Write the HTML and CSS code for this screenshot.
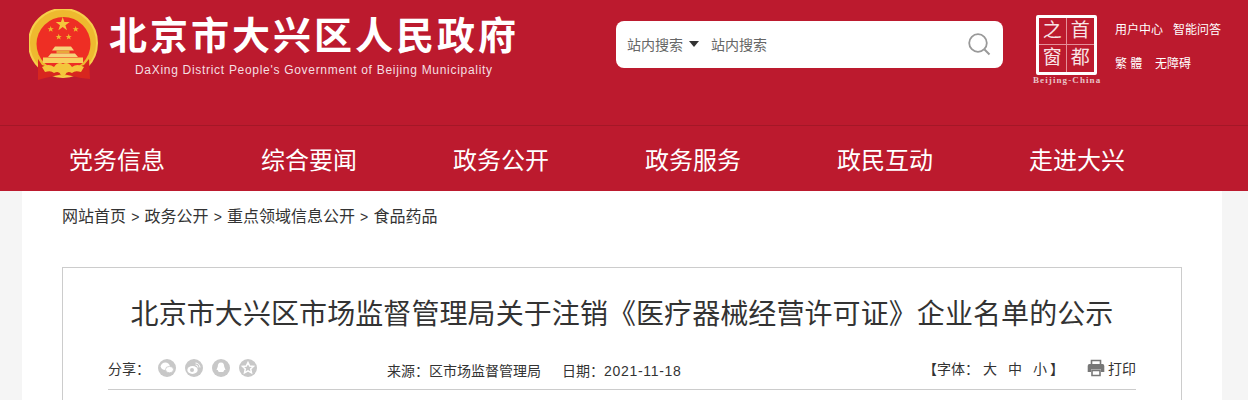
FILE: index.html
```html
<!DOCTYPE html>
<html lang="zh-CN">
<head>
  <meta charset="UTF-8">
  <title>北京市大兴区人民政府</title>
  <link rel="stylesheet" href="styles.css">
</head>
<body>

  <header class="site-header">
    <div class="emblem">
      <svg width="70" height="72" viewBox="0 0 70 72">
        <circle cx="34" cy="34" r="34" fill="#eeb92f"/>
        <circle cx="34" cy="34" r="34" fill="none" stroke="#f6cf4a" stroke-width="2"/>
        <circle cx="34.500" cy="35" r="27" fill="#ee2e24"/>
        <path d="M26 37.500 L42 37.500 L45 41.500 L23 41.500 Z" fill="#f6d27a"/>
        <path d="M27.500 41.500 L40.500 41.500 L40.500 44.500 L27.500 44.500 Z" fill="#e8a93a"/>
        <path d="M22 44.500 L46 44.500 L49 48 L19 48 Z" fill="#f6d27a"/>
        <path d="M14 48.500 L54 48.500 L54 54 L14 54 Z" fill="#f8cf5e"/>
        <path d="M9 50 L13 56 Q34 64 55 56 L60 50 L61 70 L52 69 L34 65 L16 69 L9 71 Z" fill="#d8261f"/>
        <path d="M13 58 Q20 54 25 58 Q29 52 34 55 Q39 52 43 58 Q48 54 55 58 L52 63 Q46 61 43 64 Q38 61 36 66 L34 69 L32 66 Q30 61 25 64 Q22 61 16 63 Z" fill="#f4c63c"/>
        <path d="M33.700 8 L35.400 13 L40.700 13 L36.400 16.200 L38 21.200 L33.700 18.100 L29.400 21.200 L31 16.200 L26.700 13 L32 13 Z" fill="#f4c63c"/>
        <path d="M21.700 17 L22.500 19.200 L24.800 19.200 L23 20.600 L23.600 22.800 L21.700 21.500 L19.800 22.800 L20.400 20.600 L18.600 19.200 L20.900 19.200 Z" fill="#eeb92f"/>
        <path d="M46.700 17 L47.500 19.200 L49.800 19.200 L48 20.600 L48.600 22.800 L46.700 21.500 L44.800 22.800 L45.400 20.600 L43.600 19.200 L45.900 19.200 Z" fill="#eeb92f"/>
        <path d="M29.700 24.700 L30.500 26.900 L32.800 26.900 L31 28.300 L31.600 30.500 L29.700 29.200 L27.800 30.500 L28.400 28.300 L26.600 26.900 L28.900 26.900 Z" fill="#eeb92f"/>
        <path d="M39.700 24.700 L40.500 26.900 L42.800 26.900 L41 28.300 L41.600 30.500 L39.700 29.200 L37.800 30.500 L38.400 28.300 L36.600 26.900 L38.900 26.900 Z" fill="#eeb92f"/>
      </svg>
    </div>
    <div class="site-name">
      <div class="site-name-cn">北京市大兴区人民政府</div>
      <div class="site-name-en">DaXing District People's Government of Beijing Municipality</div>
    </div>

    <div class="search-box">
      <span class="search-scope">站内搜索</span>
      <span class="search-arrow"></span>
      <span class="search-input">站内搜索</span>
      <svg class="search-icon" width="23" height="23" viewBox="0 0 23 23">
        <circle cx="10" cy="10" r="8.800" fill="none" stroke="#999" stroke-width="1.800"/>
        <path d="M16.500 16.500 L21.500 21.500" stroke="#999" stroke-width="2"/>
      </svg>
    </div>

    <div class="capital-logo">
      <div class="capital-box">
        <span>之</span><span>首</span><span>窗</span><span>都</span>
      </div>
      <div class="capital-en">Beijing-China</div>
    </div>

    <div class="top-links">
      <div class="top-links-row">
        <a>用户中心</a>
        <a>智能问答</a>
      </div>
      <div class="top-links-row">
        <a>繁 體</a>
        <a>无障碍</a>
      </div>
    </div>
  </header>

  <nav class="main-nav">
    <a>党务信息</a>
    <a>综合要闻</a>
    <a>政务公开</a>
    <a>政务服务</a>
    <a>政民互动</a>
    <a>走进大兴</a>
  </nav>

  <div class="page">
    <div class="breadcrumb">
      <a>网站首页</a> &gt; <a>政务公开</a> &gt; <a>重点领域信息公开</a> &gt; <a>食品药品</a>
    </div>

    <div class="article">
      <h1>北京市大兴区市场监督管理局关于注销《医疗器械经营许可证》企业名单的公示</h1>

      <div class="meta">
        <div class="share">
          <span>分享：</span>
          <div class="share-icons">
            <svg width="18" height="18" viewBox="0 0 18 18">
              <circle cx="9" cy="9" r="9" fill="#c8c8c8"/>
              <ellipse cx="7.300" cy="7.300" rx="4.600" ry="3.700" fill="#fff"/>
              <ellipse cx="11.500" cy="10.600" rx="4" ry="3.200" fill="#fff" stroke="#c8c8c8" stroke-width=".8"/>
            </svg>
            <svg width="18" height="18" viewBox="0 0 18 18">
              <circle cx="9" cy="9" r="9" fill="#c8c8c8"/>
              <ellipse cx="7.500" cy="11" rx="5.200" ry="3.900" fill="#fff"/>
              <circle cx="7" cy="11" r="2" fill="#c8c8c8"/>
              <path d="M10.500 4 A4.500 4.500 0 0 1 15 8.500 M10.500 6 A2.500 2.500 0 0 1 13 8.500" fill="none" stroke="#fff" stroke-width="1"/>
            </svg>
            <svg width="18" height="18" viewBox="0 0 18 18">
              <circle cx="9" cy="9" r="9" fill="#c8c8c8"/>
              <path d="M9 3.500 C6.500 3.500 5.800 5.500 5.800 7.500 L4.500 11 L5.800 11 C6 12 6.500 12.800 7 13 L11 13 C11.500 12.800 12 12 12.200 11 L13.500 11 L12.200 7.500 C12.200 5.500 11.500 3.500 9 3.500 Z" fill="#fff"/>
            </svg>
            <svg width="18" height="18" viewBox="0 0 18 18">
              <circle cx="9" cy="9" r="9" fill="#c8c8c8"/>
              <path d="M9 3.500 L10.700 7 L14.500 7.400 L11.700 10 L12.500 13.800 L9 11.900 L5.500 13.800 L6.300 10 L3.500 7.400 L7.300 7 Z" fill="none" stroke="#fff" stroke-width="1.500"/>
            </svg>
          </div>
        </div>

        <div class="source">
          <span>来源：区市场监督管理局</span>
          <span>日期：<span class="date-num">2021-11-18</span></span>
        </div>

        <div class="tools">
          <div class="font-size">
            <span>【字体：</span>
            <a>大</a>
            <a>中</a>
            <a>小</a>
            <span>】</span>
          </div>
          <div class="print">
            <svg width="18" height="18" viewBox="0 0 18 18">
              <path d="M4.500 5 L4.500 1.500 L13.500 1.500 L13.500 5" fill="none" stroke="#777" stroke-width="1.600"/>
              <path d="M2.500 5 L15.500 5 Q17.300 5 17.300 7 L17.300 13 L14 13 L14 10.500 L4 10.500 L4 13 L.7 13 L.7 7 Q.7 5 2.500 5 Z" fill="#777"/>
              <path d="M5 11.500 L13 11.500 L13 16.500 L5 16.500 Z" fill="none" stroke="#777" stroke-width="1.600"/>
            </svg>
            <span>打印</span>
          </div>
        </div>
      </div>
    </div>
  </div>

</body>
</html>
```

FILE: styles.css
```css
/* General Styles */
html,
body {
  height: 400px;
  overflow: hidden;
}

body {
  margin: 0;
  background-color: #f5f5f5;
  color: #333;
  font-family: "Liberation Sans", "Noto Sans CJK SC", sans-serif;
  font-size: 14px;
}

/* Header */
.site-header {
  display: flex;
  height: 125px;
  box-sizing: border-box;
  background-color: #bc1a2e;
  color: #fff;
}

.emblem {
  margin: 9px 0 0 29px;
}

.site-name {
  width: 420px;
  margin-left: 10px;
}

.site-name-cn {
  margin-top: 7px;
  font-size: 38px;
  line-height: 58px;
  font-weight: bold;
  letter-spacing: 3px;
  white-space: nowrap;
}

.site-name-en {
  margin: -2px 0 0 26px;
  font-size: 12px;
  line-height: 14px;
  letter-spacing: 0.7px;
  white-space: nowrap;
  color: #f4dfe1;
}

.search-box {
  display: flex;
  align-items: center;
  width: 387px;
  height: 47px;
  margin: 21px 0 0 87px;
  padding: 0 12px 0 11px;
  box-sizing: border-box;
  background-color: #fff;
  border-radius: 8px;
  color: #666;
  font-size: 14px;
}

.search-scope,
.search-input {
  padding-bottom: 2px;
}

.search-arrow {
  width: 0;
  height: 0;
  margin: 0 12px 2px 6px;
  border-left: 5.5px solid transparent;
  border-right: 5.5px solid transparent;
  border-top: 6px solid #333;
}

.search-input {
  flex: 1;
}

.capital-logo {
  width: 70px;
  margin: 15px 0 0 33px;
}

.capital-box {
  display: grid;
  grid-template-columns: 1fr 1fr;
  grid-template-rows: 1fr 1fr;
  width: 61px;
  height: 60px;
  box-sizing: border-box;
  border: 3px solid #fff;
  border-radius: 2px;
  font-size: 19px;
  line-height: 26px;
  text-align: center;
  color: #f8e4e6;
}

.capital-box span:nth-child(odd) {
  border-right: 1px solid #e58f99;
}

.capital-box span:nth-child(-n+2) {
  border-bottom: 1px solid #e58f99;
}

.capital-en {
  margin-left: -3px;
  font-family: "Liberation Serif", serif;
  font-size: 9px;
  font-weight: bold;
  line-height: 11px;
  letter-spacing: 1.1px;
  white-space: nowrap;
  color: #e9c3c8;
}

.top-links {
  margin: 21px 0 0 9px;
  font-size: 12px;
}

.top-links-row {
  display: flex;
  gap: 10px;
  height: 34px;
  line-height: 18px;
  white-space: nowrap;
}

.top-links-row a:first-child {
  min-width: 30px;
}

/* Nav */
.main-nav {
  display: flex;
  height: 66px;
  padding-left: 21px;
  background-color: #bc1a2e;
  border-top: 1px solid #a41727;
  box-sizing: border-box;
}

.main-nav a {
  width: 192px;
  text-align: center;
  color: #fff;
  font-size: 24px;
  line-height: 70px;
}

/* Content */
.page {
  width: 1120px;
  height: 209px;
  margin: 0 26px 0 22px;
  padding: 0 40px;
  background-color: #fff;
}

.breadcrumb {
  height: 76px;
  font-size: 14px;
  line-height: 52px;
  word-spacing: 1.25px;
}

.breadcrumb a {
  font-size: 16px;
}

.article {
  height: 200px;
  padding: 0 45px;
  border: 1px solid #ccc;
}

.article h1 {
  margin: 0;
  padding-top: 23px;
  font-size: 28px;
  font-weight: normal;
  line-height: 48px;
  letter-spacing: 0.08px;
  text-align: center;
  color: #333;
  white-space: nowrap;
}

.meta {
  display: grid;
  grid-template-columns: 279px auto 1fr;
  height: 51px;
  padding-top: 20px;
  box-sizing: border-box;
  border-bottom: 1px solid #ccc;
  font-size: 14px;
  line-height: 20px;
  color: #333;
}

.share {
  display: flex;
  gap: 8px;
}

.share-icons {
  display: flex;
  gap: 9px;
}

.source {
  display: flex;
  gap: 21px;
  padding-top: 2px;
}

.date-num {
  letter-spacing: 0.7px;
}

.tools {
  display: flex;
  justify-content: flex-end;
  gap: 23px;
}

.font-size {
  display: flex;
}

.font-size a {
  margin-left: 4px;
}

.font-size a + a {
  margin-left: 11px;
}

.font-size a:last-of-type + span {
  margin-left: 3px;
}

.print {
  display: flex;
  gap: 3px;
}
```
